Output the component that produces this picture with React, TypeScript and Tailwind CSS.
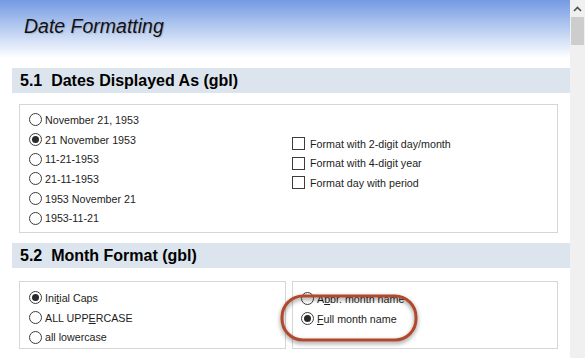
import React from "react";

const Radio = ({ checked, label }: { checked?: boolean; label: React.ReactNode }) => (
  <div className="flex h-[19.7px] items-center gap-[3px]">
    <span className="flex h-[13px] w-[13px] items-center justify-center rounded-full border border-[#3c3c3c] bg-white">
      {checked && <span className="h-[7px] w-[7px] rounded-full bg-[#2a2a2a]" />}
    </span>
    <span className="text-[10.7px] text-[#1c1c1c]">{label}</span>
  </div>
);

const Check = ({ label }: { label: string }) => (
  <div className="flex h-[19.5px] items-center gap-[5px]">
    <span className="h-[13px] w-[13px] border border-[#3c3c3c] bg-white" />
    <span className="text-[10.7px] text-[#1c1c1c]">{label}</span>
  </div>
);

const SectionBar = ({ title }: { title: string }) => (
  <div className="ml-[12px] flex h-[25px] items-center bg-[#dce5ed] pl-[8px] text-[16px] font-bold text-black whitespace-pre">
    {title}
  </div>
);

export default function App() {
  return (
    <div className="flex h-[358px] w-[585px] overflow-hidden bg-white font-['Liberation_Sans',Arial,sans-serif]">
      <div className="flex w-[570px] flex-col">
        <div className="h-[58px] bg-gradient-to-b from-[#749ae2] via-[#b9cdf0] to-white pl-[24px] pt-[12px]">
          <h1 className="text-[19.5px] italic text-[#111] [text-shadow:1px_1px_1px_rgba(0,0,0,0.15)]">
            Date Formatting
          </h1>
        </div>

        <div className="mt-[10px]">
          <SectionBar title="5.1  Dates Displayed As (gbl)" />
        </div>

        <div className="ml-[19px] mt-[11px] flex h-[129px] w-[539px] border border-[#d6d6d6] pl-[9px] pt-[5px]">
          <div className="w-[263px]">
            <Radio label="November 21, 1953" />
            <Radio checked label="21 November 1953" />
            <Radio label="11-21-1953" />
            <Radio label="21-11-1953" />
            <Radio label="1953 November 21" />
            <Radio label="1953-11-21" />
          </div>
          <div className="pt-[24px]">
            <Check label="Format with 2-digit day/month" />
            <Check label="Format with 4-digit year" />
            <Check label="Format day with period" />
          </div>
        </div>

        <div className="mt-[10px]">
          <SectionBar title="5.2  Month Format (gbl)" />
        </div>

        <div className="ml-[19px] mt-[13px] flex gap-[6px]">
          <div className="h-[68px] w-[267px] border border-[#d6d6d6] pl-[9px] pt-[6px]">
            <Radio checked label={<>Ini<u>t</u>ial Caps</>} />
            <Radio label={<>ALL UPP<u>E</u>RCASE</>} />
            <Radio label="all lowercase" />
          </div>
          <div className="relative h-[68px] w-[266px] border border-[#d6d6d6] pl-[8px] pt-[7px]">
            <Radio label={<>A<u>b</u>br. month name</>} />
            <Radio checked label={<><u>F</u>ull month name</>} />
            <svg
              className="absolute left-[-13px] top-[12px] drop-shadow-[0_2px_2px_rgba(0,0,0,0.45)]"
              width="140"
              height="50"
              viewBox="0 0 140 50"
            >
              <rect x="2" y="2" width="134" height="44" rx="21" fill="none" stroke="#b3482c" strokeWidth="3" />
            </svg>
          </div>
        </div>
      </div>

      <div className="flex w-[15px] flex-col bg-[#f0f0f0]">
        <div className="flex h-[17px] items-center justify-center">
          <svg width="9" height="6" viewBox="0 0 9 6">
            <path d="M1 5 L4.5 1.5 L8 5" fill="none" stroke="#505050" strokeWidth="1.6" />
          </svg>
        </div>
        <div className="mx-[1px] h-[28px] bg-[#cdcdcd]" />
      </div>
    </div>
  );
}
